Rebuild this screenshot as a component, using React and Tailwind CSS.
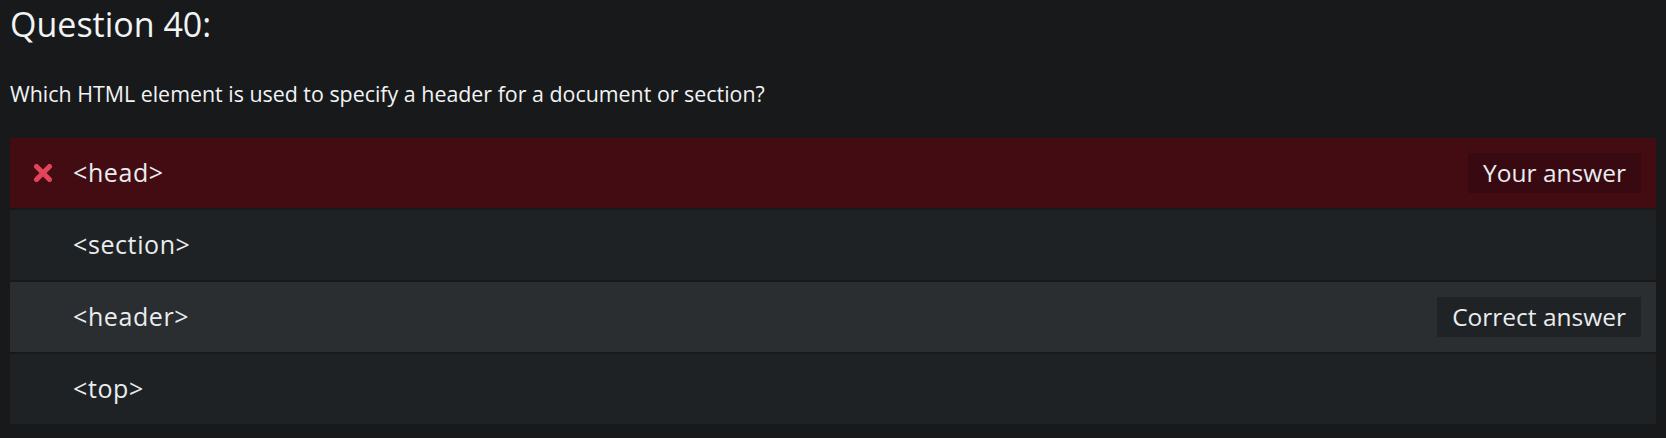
const options = [
  { text: "<head>", kind: "wrong", badge: "Your answer" },
  { text: "<section>", kind: "plain" },
  { text: "<header>", kind: "correct", badge: "Correct answer" },
  { text: "<top>", kind: "plain" },
];

function CrossIcon() {
  return (
    <svg width="20" height="18" viewBox="0 0 20 18" className="text-[#e2445c]">
      <path
        d="M3.5 2.5 L16.5 15.5 M16.5 2.5 L3.5 15.5"
        stroke="currentColor"
        strokeWidth="5"
        strokeLinecap="round"
      />
    </svg>
  );
}

function Option({ option }) {
  const rowBg =
    option.kind === "wrong"
      ? "bg-[#430c13]"
      : option.kind === "correct"
      ? "bg-[#2b2e31]"
      : "bg-[#1f2224]";
  const badgeBg = option.kind === "wrong" ? "bg-[#380910]" : "bg-[#202325]";

  return (
    <li className={`flex h-[70px] items-center pl-[23px] pr-[15px] ${rowBg}`}>
      <span className="flex w-[20px] justify-center">
        {option.kind === "wrong" && <CrossIcon />}
      </span>
      <span className="ml-[20px] flex-1 text-[25px] tracking-[0.6px] text-[#e9ecef]">
        {option.text}
      </span>
      {option.badge && (
        <span
          className={`flex h-[40px] items-center px-[15px] text-[24.5px] text-[#e9ecef] ${badgeBg}`}
        >
          {option.badge}
        </span>
      )}
    </li>
  );
}

export default function App() {
  return (
    <div
      className="min-h-screen bg-[#18191b] px-[10px] pt-[1px]"
      style={{ fontFamily: '"Open Sans", "Noto Sans", sans-serif' }}
    >
      <h2 className="text-[34px] leading-[46px] text-[#f1f3f5]">Question 40:</h2>
      <p className="mt-[33px] text-[21.4px] leading-[28px] text-[#f1f3f5]">
        Which HTML element is used to specify a header for a document or section?
      </p>
      <ul className="mt-[30px] flex flex-col gap-[2px]">
        {options.map((o) => (
          <Option key={o.text} option={o} />
        ))}
      </ul>
    </div>
  );
}
